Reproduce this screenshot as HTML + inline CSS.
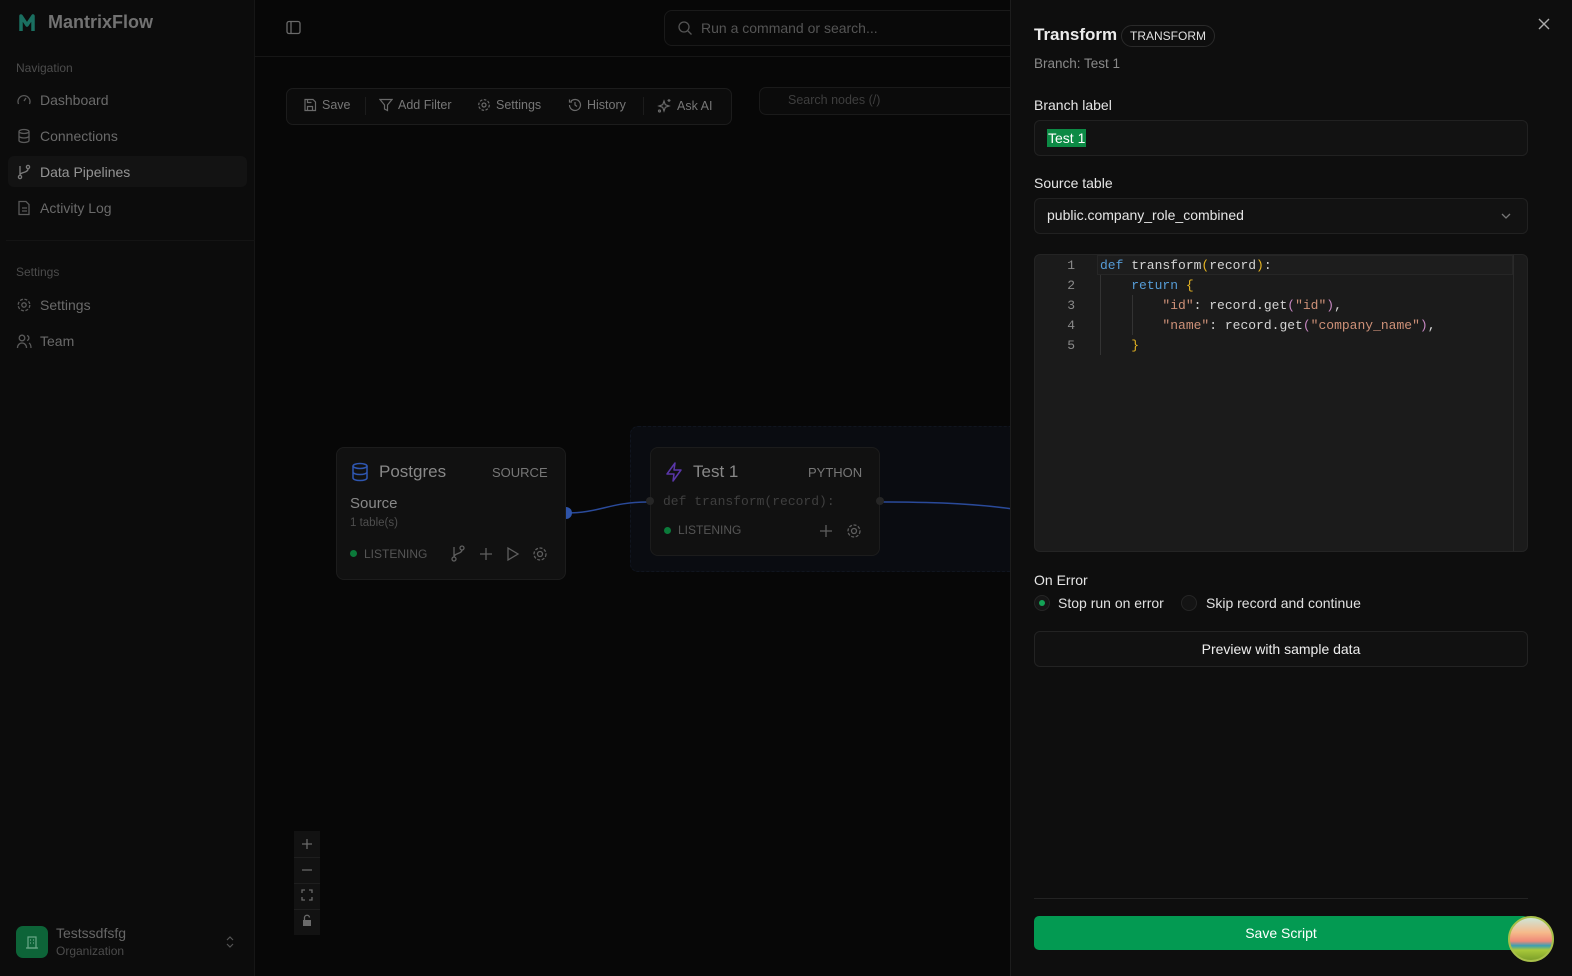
<!DOCTYPE html>
<html><head><meta charset="utf-8"><style>
*{box-sizing:border-box;margin:0;padding:0}
body{width:1572px;height:976px;overflow:hidden;background:#070707;font-family:"Liberation Sans",sans-serif;color:#ddd;position:relative}
.a{position:absolute}
svg{display:block}
.side{left:0;top:0;width:255px;height:976px;background:#0c0c0c;border-right:1px solid #161616}
.nav{left:16px;font-size:14px;color:#6a6a6a;display:flex;align-items:center;gap:8px}
.lbl{left:16px;font-size:12px;color:#4c4c4c}
.tb{font-size:12.5px;color:#777;display:flex;align-items:center;gap:5px}
.node{background:#111;border:1px solid #1c1c1c;border-radius:8px}
.panel{left:1010px;top:0;width:562px;height:976px;background:#0e0e0e;border-left:1px solid #1d1d1d}
.mono{font-family:"Liberation Mono","DejaVu Sans Mono",monospace}
</style></head><body>
<div class="a side"></div>
<div class="a" style="left:18px;top:12px;font-size:18px;font-weight:bold;color:#727272;display:flex;align-items:center;gap:12px">
<svg width="18" height="20" viewBox="0 0 18 20"><path d="M3 18V3l6 9 6-9v15" fill="none" stroke="#1a6f60" stroke-width="3.5" stroke-linejoin="round"/></svg>MantrixFlow</div>
<div class="a lbl" style="top:61px">Navigation</div>
<div class="a nav" style="top:92px"><svg width="16" height="16" viewBox="0 0 16 16" fill="none" stroke="#5a5a5a" stroke-width="1.3"><path d="M2.5 12a6 6 0 1 1 11 0"/><path d="M8 9l2-3"/></svg>Dashboard</div>
<div class="a nav" style="top:128px"><svg width="16" height="16" viewBox="0 0 16 16" fill="none" stroke="#5a5a5a" stroke-width="1.3"><ellipse cx="8" cy="3.5" rx="5" ry="2"/><path d="M3 3.5v9c0 1.1 2.2 2 5 2s5-.9 5-2v-9M3 8c0 1.1 2.2 2 5 2s5-.9 5-2"/></svg>Connections</div>
<div class="a" style="left:8px;top:156px;width:239px;height:31px;background:#131313;border-radius:6px"></div>
<div class="a nav" style="top:164px;color:#959595"><svg width="16" height="16" viewBox="0 0 16 16" fill="none" stroke="#7a7a7a" stroke-width="1.3"><circle cx="4" cy="13" r="1.6"/><circle cx="12" cy="3" r="1.6"/><path d="M4 2v9M12 5c0 4-8 3-8 6"/></svg>Data Pipelines</div>
<div class="a nav" style="top:200px"><svg width="16" height="16" viewBox="0 0 16 16" fill="none" stroke="#5a5a5a" stroke-width="1.3"><path d="M3 1.5h7l3 3v10H3z M6 8h5M6 11h5"/></svg>Activity Log</div>
<div class="a" style="left:6px;top:240px;width:249px;height:1px;background:#141414"></div>
<div class="a lbl" style="top:265px">Settings</div>
<div class="a nav" style="top:297px"><svg width="16" height="16" viewBox="0 0 16 16" fill="none" stroke="#5a5a5a" stroke-width="1.3"><circle cx="8" cy="8" r="2.2"/><circle cx="8" cy="8" r="5.8" stroke-dasharray="3 1.6"/></svg>Settings</div>
<div class="a nav" style="top:333px"><svg width="16" height="16" viewBox="0 0 16 16" fill="none" stroke="#5a5a5a" stroke-width="1.3"><circle cx="6" cy="5" r="2.8"/><path d="M1.5 15c0-3 2-5 4.5-5s4.5 2 4.5 5M11 2.5a2.6 2.6 0 0 1 0 5M13 10c1.3.8 2 2.5 2 5"/></svg>Team</div>
<div class="a" style="left:16px;top:926px;width:32px;height:32px;background:#0d6438;border-radius:7px;display:flex;align-items:center;justify-content:center"><svg width="14" height="14" viewBox="0 0 14 14" fill="none" stroke="#6aa888" stroke-width="1.2"><rect x="3" y="2" width="8" height="11"/><path d="M1 13h12M5 5h1M8 5h1M5 8h1M8 8h1"/></svg></div>
<div class="a" style="left:56px;top:925px;font-size:14px;color:#666">Testssdfsfg</div>
<div class="a" style="left:56px;top:944px;font-size:12px;color:#4c4c4c">Organization</div>
<div class="a" style="left:225px;top:934px"><svg width="10" height="16" viewBox="0 0 10 16" fill="none" stroke="#555" stroke-width="1.2"><path d="M2 6l3-3 3 3M2 10l3 3 3-3"/></svg></div>

<div class="a" style="left:255px;top:56px;width:755px;height:1px;background:#161616"></div>
<div class="a" style="left:286px;top:20px"><svg width="15" height="15" viewBox="0 0 15 15" fill="none" stroke="#6a6a6a" stroke-width="1.3"><rect x="1" y="1.5" width="13" height="12" rx="2"/><path d="M5 1.5v12"/></svg></div>
<div class="a" style="left:664px;top:10px;width:360px;height:36px;border:1px solid #1a1a1a;border-radius:8px;background:#090909"></div>
<div class="a" style="left:677px;top:20px"><svg width="16" height="16" viewBox="0 0 16 16" fill="none" stroke="#555" stroke-width="1.3"><circle cx="7" cy="7" r="5"/><path d="M11 11l3.5 3.5"/></svg></div>
<div class="a" style="left:701px;top:20px;font-size:14px;color:#555">Run a command or search...</div>

<div class="a" style="left:286px;top:88px;width:446px;height:37px;border:1px solid #1c1c1c;border-radius:7px;background:#0c0c0c"></div>
<div class="a tb" style="left:303px;top:98px"><svg width="14" height="14" viewBox="0 0 14 14" fill="none" stroke="#6a6a6a" stroke-width="1.2"><path d="M2 1.5h8l2.5 2.5v8.5H2z M4.5 12.5v-4h5v4M4.5 1.5v3h4"/></svg>Save</div>
<div class="a" style="left:365px;top:97px;width:1px;height:18px;background:#1c1c1c"></div>
<div class="a tb" style="left:379px;top:98px"><svg width="14" height="14" viewBox="0 0 14 14" fill="none" stroke="#6a6a6a" stroke-width="1.2"><path d="M1 1.5h12L8.5 7v5.5l-3-1.5V7z"/></svg>Add Filter</div>
<div class="a tb" style="left:477px;top:98px"><svg width="14" height="14" viewBox="0 0 14 14" fill="none" stroke="#6a6a6a" stroke-width="1.2"><circle cx="7" cy="7" r="2"/><circle cx="7" cy="7" r="5.3" stroke-dasharray="2.6 1.5"/></svg>Settings</div>
<div class="a tb" style="left:568px;top:98px"><svg width="14" height="14" viewBox="0 0 14 14" fill="none" stroke="#6a6a6a" stroke-width="1.2"><path d="M1.5 7a5.5 5.5 0 1 0 1.6-3.9M1.5 1.5v2.5H4M7 4v3l2 1.5"/></svg>History</div>
<div class="a" style="left:643px;top:97px;width:1px;height:18px;background:#1c1c1c"></div>
<div class="a tb" style="left:657px;top:98px"><svg width="15" height="15" viewBox="0 0 15 15" fill="none" stroke="#6a6a6a" stroke-width="1.2"><path d="M7 3l1.3 3.7L12 8l-3.7 1.3L7 13l-1.3-3.7L2 8l3.7-1.3z M12 1v3M10.5 2.5h3"/><circle cx="2.5" cy="13" r="1"/></svg>Ask AI</div>
<div class="a" style="left:759px;top:87px;width:260px;height:28px;border:1px solid #1a1a1a;border-radius:7px;background:#0b0b0b"></div>
<div class="a" style="left:788px;top:93px;font-size:12.5px;color:#3e3e3e">Search nodes (/)</div>

<div class="a" style="left:630px;top:426px;width:390px;height:146px;background:#0a0c11;border:1px dashed #10151f;border-radius:8px"></div>
<svg class="a" style="left:560px;top:490px" width="460" height="30"><path d="M6 23C40 23 50 12 88 12" fill="none" stroke="#2a4a9a" stroke-width="1.5"/><path d="M320 12C380 12 420 14 460 20" fill="none" stroke="#2a4a9a" stroke-width="1.5"/><circle cx="6" cy="23" r="6" fill="#2e53a8"/></svg>
<div class="a node" style="left:336px;top:447px;width:230px;height:133px"></div>
<div class="a" style="left:350px;top:462px"><svg width="20" height="20" viewBox="0 0 20 20" fill="none" stroke="#2f57b2" stroke-width="1.5"><ellipse cx="10" cy="4" rx="7" ry="2.5"/><path d="M3 4v12c0 1.4 3 2.5 7 2.5s7-1.1 7-2.5V4M3 10c0 1.4 3 2.5 7 2.5s7-1.1 7-2.5"/></svg></div>
<div class="a" style="left:379px;top:462px;font-size:17px;color:#888">Postgres</div>
<div class="a" style="left:492px;top:465px;font-size:13px;color:#777">SOURCE</div>
<div class="a" style="left:350px;top:495px;font-size:15px;color:#888">Source</div>
<div class="a" style="left:350px;top:517px;font-size:11.5px;color:#4e4e4e">1 table(s)</div>
<div class="a" style="left:350px;top:550px;width:7px;height:7px;border-radius:50%;background:#0b7a3a"></div>
<div class="a" style="left:364px;top:547px;font-size:12px;color:#555">LISTENING</div>
<div class="a" style="left:450px;top:545px"><svg width="98" height="18" viewBox="0 0 98 18" fill="none" stroke="#5f5f5f" stroke-width="1.3"><circle cx="4" cy="14" r="2"/><circle cx="12" cy="3" r="2"/><path d="M4 2v10M12 5c0 4-8 3-8 7M36 3v12M30 9h12M58 3l10 6-10 6z"/><circle cx="90" cy="9" r="2.5"/><circle cx="90" cy="9" r="6" stroke-dasharray="3 1.6"/></svg></div>
<div class="a node" style="left:650px;top:447px;width:230px;height:109px"></div>
<div class="a" style="left:664px;top:462px"><svg width="20" height="20" viewBox="0 0 20 20" fill="none" stroke="#5a36a8" stroke-width="1.5" stroke-linejoin="round"><path d="M11 1L3 12h7l-1 7 8-11h-7z"/></svg></div>
<div class="a" style="left:693px;top:462px;font-size:17px;color:#888">Test 1</div>
<div class="a" style="left:808px;top:465px;font-size:13px;color:#777">PYTHON</div>
<div class="a mono" style="left:663px;top:494px;font-size:13px;color:#3f3f3f">def transform(record):</div>
<div class="a" style="left:646px;top:497px;width:8px;height:8px;border-radius:50%;background:#262626"></div>
<div class="a" style="left:876px;top:497px;width:8px;height:8px;border-radius:50%;background:#262626"></div>
<div class="a" style="left:664px;top:527px;width:7px;height:7px;border-radius:50%;background:#0b7a3a"></div>
<div class="a" style="left:678px;top:523px;font-size:12px;color:#555">LISTENING</div>
<div class="a" style="left:818px;top:522px"><svg width="46" height="18" viewBox="0 0 46 18" fill="none" stroke="#5f5f5f" stroke-width="1.3"><path d="M8 3v12M2 9h12"/><circle cx="36" cy="9" r="2.5"/><circle cx="36" cy="9" r="6" stroke-dasharray="3 1.6"/></svg></div>
<div class="a" style="left:294px;top:831px;width:26px;height:104px;background:#121212"></div>
<div class="a" style="left:294px;top:857px;width:26px;height:1px;background:#1e1e1e"></div>
<div class="a" style="left:294px;top:883px;width:26px;height:1px;background:#1e1e1e"></div>
<div class="a" style="left:294px;top:909px;width:26px;height:1px;background:#1e1e1e"></div>
<svg class="a" style="left:294px;top:831px" width="26" height="104" fill="none" stroke="#6a6a6a" stroke-width="1.3"><path d="M13 8v10M8 13h10M8 39h10M8 62v-3h3M15 59h3v3M18 66v3h-3M11 69H8v-3"/><rect x="9" y="89" width="8" height="6" fill="#6a6a6a" stroke="none"/><path d="M10.5 89v-2a2.5 2.5 0 0 1 5-.5"/></svg>

<div class="a panel"></div>
<div class="a" style="left:1034px;top:25px;font-size:17px;font-weight:bold;color:#ececec">Transform</div>
<div class="a" style="left:1121px;top:25px;height:22px;padding:0 8px;border:1px solid #2a2a2a;border-radius:11px;font-size:12px;color:#e0e0e0;line-height:20px">TRANSFORM</div>
<div class="a" style="left:1537px;top:17px"><svg width="14" height="14" viewBox="0 0 14 14" stroke="#aaa" stroke-width="1.4"><path d="M2 2l10 10M12 2L2 12"/></svg></div>
<div class="a" style="left:1034px;top:56px;font-size:13.5px;color:#8a8a8a">Branch: Test 1</div>
<div class="a" style="left:1034px;top:97px;font-size:14px;color:#e6e6e6">Branch label</div>
<div class="a" style="left:1034px;top:120px;width:494px;height:36px;border:1px solid #212121;border-radius:6px;background:#121212"></div>
<div class="a" style="left:1047px;top:129px;font-size:14px;color:#fff;background:#0c8a45;padding:0 1px;line-height:18px">Test 1</div>
<div class="a" style="left:1034px;top:175px;font-size:14px;color:#e6e6e6">Source table</div>
<div class="a" style="left:1034px;top:198px;width:494px;height:36px;border:1px solid #212121;border-radius:6px;background:#121212"></div>
<div class="a" style="left:1047px;top:207px;font-size:14px;color:#e6e6e6">public.company_role_combined</div>
<div class="a" style="left:1500px;top:210px"><svg width="12" height="12" viewBox="0 0 12 12" fill="none" stroke="#777" stroke-width="1.3"><path d="M2 4l4 4 4-4"/></svg></div>
<div class="a" style="left:1034px;top:254px;width:494px;height:298px;border:1px solid #242424;border-radius:6px;background:#1b1b1b;overflow:hidden">
<div class="a" style="left:62px;top:0;width:416px;height:20px;border:1px solid #262626;background:#1d1d1d"></div>
<div class="a" style="left:478px;top:0;width:1px;height:298px;background:#2a2a2a"></div>
<div class="a" style="left:65px;top:20px;width:1px;height:80px;background:#333"></div>
<div class="a" style="left:97px;top:40px;width:1px;height:40px;background:#333"></div>
<div class="a mono" style="left:0;top:1px;width:40px;text-align:right;font-size:13px;line-height:20px;color:#8a8a8a">1<br>2<br>3<br>4<br>5</div>
<div class="a mono" style="left:65px;top:1px;font-size:13px;line-height:20px;color:#d4d4d4;white-space:pre"><span style="color:#569cd6">def</span> transform<span style="color:#e6b422">(</span>record<span style="color:#e6b422">)</span>:
    <span style="color:#569cd6">return</span> <span style="color:#e6b422">{</span>
        <span style="color:#ce9178">"id"</span>: record.get<span style="color:#c586c0">(</span><span style="color:#ce9178">"id"</span><span style="color:#c586c0">)</span>,
        <span style="color:#ce9178">"name"</span>: record.get<span style="color:#c586c0">(</span><span style="color:#ce9178">"company_name"</span><span style="color:#c586c0">)</span>,
    <span style="color:#e6b422">}</span></div>
</div>
<div class="a" style="left:1034px;top:572px;font-size:14px;color:#e6e6e6">On Error</div>
<div class="a" style="left:1034px;top:595px;width:16px;height:16px;border-radius:50%;border:1px solid #262626;background:#161616"></div>
<div class="a" style="left:1039px;top:600px;width:6px;height:6px;border-radius:50%;background:#14a356"></div>
<div class="a" style="left:1058px;top:595px;font-size:14px;color:#e0e0e0">Stop run on error</div>
<div class="a" style="left:1181px;top:595px;width:16px;height:16px;border-radius:50%;border:1px solid #262626;background:#141414"></div>
<div class="a" style="left:1206px;top:595px;font-size:14px;color:#e0e0e0">Skip record and continue</div>
<div class="a" style="left:1034px;top:631px;width:494px;height:36px;border:1px solid #232323;border-radius:6px;background:#111;text-align:center;line-height:34px;font-size:14px;color:#eee">Preview with sample data</div>
<div class="a" style="left:1034px;top:898px;width:494px;height:1px;background:#232323"></div>
<div class="a" style="left:1034px;top:916px;width:494px;height:34px;border-radius:5px;background:#039a52;text-align:center;line-height:34px;font-size:14px;color:#fff">Save Script</div>
<div class="a" style="left:1508px;top:916px;width:46px;height:46px;border-radius:50%;background:linear-gradient(180deg,#cfe6d8 0%,#f6b98a 35%,#ef8a78 55%,#3a9fb2 66%,#a8c83a 76%,#7ea02a 100%);border:2px solid #a8c04a"></div>
</body></html>
